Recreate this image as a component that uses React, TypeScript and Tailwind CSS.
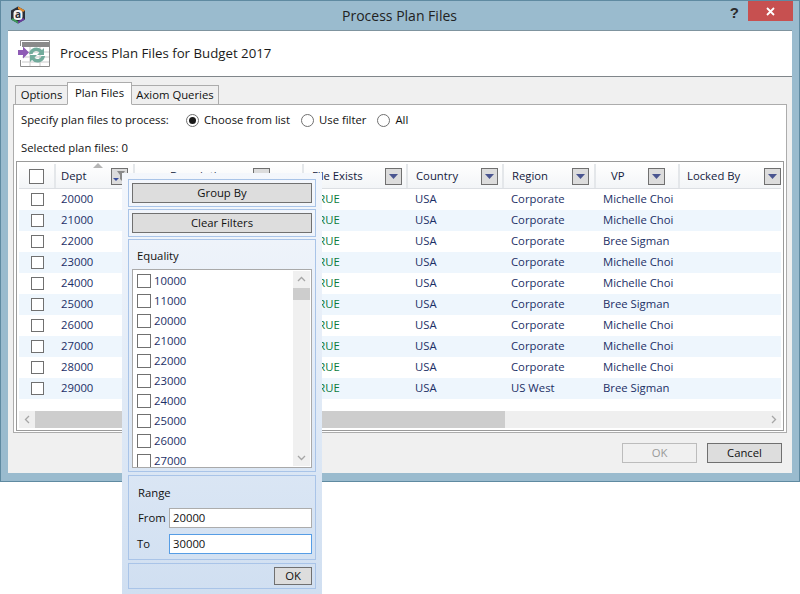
const rows = [
  ["20000", "USA", "Corporate", "Michelle Choi"],
  ["21000", "USA", "Corporate", "Michelle Choi"],
  ["22000", "USA", "Corporate", "Bree Sigman"],
  ["23000", "USA", "Corporate", "Michelle Choi"],
  ["24000", "USA", "Corporate", "Michelle Choi"],
  ["25000", "USA", "Corporate", "Bree Sigman"],
  ["26000", "USA", "Corporate", "Michelle Choi"],
  ["27000", "USA", "Corporate", "Michelle Choi"],
  ["28000", "USA", "Corporate", "Michelle Choi"],
  ["29000", "USA", "US West", "Bree Sigman"],
];

const listValues = ["10000", "11000", "20000", "21000", "22000", "23000", "24000", "25000", "26000", "27000"];

const Check = ({ className = "w-[14px] h-[14px]" }: { className?: string }) => (
  <span className={`block shrink-0 border border-[#707070] bg-white ${className}`} />
);

const Radio = ({ on = false }: { on?: boolean }) => (
  <span className="flex items-center justify-center w-[13px] h-[13px] rounded-full border border-[#707070] bg-white">
    {on && <span className="block w-[7px] h-[7px] rounded-full bg-[#1a1a1a]" />}
  </span>
);

const HeadButton = ({ filter = false }: { filter?: boolean }) => (
  <span className="flex items-center justify-center w-[17px] h-[17px] border border-[#707070] bg-[#dcdcdc]">
    {filter ? (
      <svg width="13" height="13" viewBox="0 0 13 13">
        <path d="M4 1h8L9 5v6L7 9V5z" fill="#8a8a8a" />
        <path d="M0 8h6L3 11z" fill="#3b4f9c" />
      </svg>
    ) : (
      <svg width="9" height="5" viewBox="0 0 9 5">
        <path d="M0 0h9L4.5 5z" fill="#4a5590" />
      </svg>
    )}
  </span>
);

const Head = ({ label, w, filter, pl, pr }: { label: string; w: string; filter?: boolean; pl: string; pr: string }) => (
  <div className={`${w} ${pl} ${pr} h-full shrink-0 flex items-center justify-between border-r-2 border-[#e4e7ea] last:border-r-0`}>
    <span className="text-[#14213d]">{label}</span>
    <HeadButton filter={filter} />
  </div>
);

const Chevron = ({ d }: { d: string }) => (
  <svg width="9" height="9" viewBox="0 0 9 9" fill="none" stroke="#a6a6a6" strokeWidth="1.3">
    <path d={d} />
  </svg>
);

const TitleBar = () => (
  <div className="h-[29px] flex items-center relative">
    <svg className="ml-[8px] -mt-[1px]" width="18" height="18" viewBox="0 0 18 18">
      <path d="M9 0.5l7 4v9l-7 4-7-4v-9z" fill="#2b2f38" />
      <path d="M9 0.5l7 4-2 1.5-5-3z" fill="#e08a2c" />
      <path d="M2 13.5l7 4v-2l-5-3.5z" fill="#3d9a5c" />
      <path d="M16 13.5l-7 4v-2l5-3.5z" fill="#6a3fa0" />
      <rect x="4.5" y="4" width="9" height="10" rx="3.5" fill="#f4f4f4" />
      <text x="9" y="12.2" textAnchor="middle" fontSize="10" fontWeight="700" fill="#2b2f38" fontFamily="'Open Sans', sans-serif">a</text>
    </svg>
    <span className="flex-1 text-center text-[14px] text-[#222] pr-[27px]">Process Plan Files</span>
    <span className="absolute right-[60px] top-[1px] text-[15px] font-bold text-[#2b2b2b] font-['Liberation_Sans',sans-serif]">?</span>
    <span className="absolute right-[6px] top-0 w-[45px] h-[20px] bg-[#c75050] flex items-center justify-center">
      <svg width="9" height="9" viewBox="0 0 9 9" stroke="#fff" strokeWidth="1.8">
        <path d="M1 1l7 7M8 1l-7 7" />
      </svg>
    </span>
  </div>
);

const HeaderIcon = () => (
  <svg width="33" height="28" viewBox="0 0 33 28" className="ml-[10px] shrink-0">
    <path d="M31.5 6V.5h-29V6M2.5 20v6.5h29V6" fill="#fff" stroke="#8c8c8c" />
    <rect x="4" y="2" width="27" height="5" fill="#8a8a8a" />
    <path d="M4 12h27M4 17h27M4 22h27M12 7v19M22 7v19" stroke="#c9c9c9" />
    <path d="M0 10h5V6.5l6 6-6 6V15H0z" fill="#8e5bb5" />
    <path d="M11 14a7.5 7.5 0 0 1 13-4l2-2v7h-7l2.5-2.5a4 4 0 0 0-7 1.5z" fill="#72ab9c" />
    <path d="M27 16a7.5 7.5 0 0 1-13 4l-2 2v-7h7l-2.5 2.5a4 4 0 0 0 7-1.5z" fill="#72ab9c" />
  </svg>
);

const Tabs = () => (
  <div className="flex items-end h-[22px] pl-[2px] relative z-10 -mb-px">
    <div className="w-[52px] h-[20px] border border-[#acacac] border-r-0 bg-[#efefef] flex items-center justify-center">Options</div>
    <div className="w-[65px] h-[23px] border border-[#acacac] border-b-white bg-white flex items-center justify-center">Plan Files</div>
    <div className="w-[87px] h-[20px] border border-[#acacac] border-l-0 bg-[#efefef] flex items-center justify-center">Axiom Queries</div>
  </div>
);

const Grid = () => (
  <div className="mx-[2px] h-[270px] border border-[#9a9a9a] flex flex-col bg-white">
    <div className="mx-[2px] h-[26px] mt-px pt-px flex items-center border-b border-[#dcdfe3] bg-gradient-to-b from-white to-[#f3f5f7] relative">
      <div className="w-[37px] h-full flex items-center justify-center border-r-2 border-[#e4e7ea] shrink-0">
        <Check className="w-[15px] h-[15px]" />
      </div>
      <span className="absolute left-[74px] top-0 w-0 h-0 border-x-[5px] border-x-transparent border-b-[5px] border-b-[#b5b5b5]" />
      <Head label="Dept" w="w-[79px]" pl="pl-[5px]" pr="pr-[5px]" filter />
      <Head label="Description" w="w-[169px]" pl="pl-[35px]" pr="pr-[32px]" />
      <Head label="File Exists" w="w-[104px]" pl="pl-2" pr="pr-[4px]" />
      <Head label="Country" w="w-[96px]" pl="pl-2" pr="pr-[4px]" />
      <Head label="Region" w="w-[92px]" pl="pl-2" pr="pr-[5px]" />
      <Head label="VP" w="w-[84px]" pl="pl-[15px]" pr="pr-[13px]" />
      <Head label="Locked By" w="w-[102px]" pl="pl-[7px]" pr="pr-px" />
    </div>
    <div className="h-[210px]">
      {rows.map((r, i) => (
        <div key={r[0]} className={`mx-[2px] h-[21px] flex items-center text-[#1c2f66] ${i % 2 ? "bg-[#eef6fd]" : "bg-white"}`}>
          <div className="w-[37px] flex justify-center shrink-0">
            <Check className="w-[13px] h-[13px]" />
          </div>
          <span className="w-[79px] pl-[5px] shrink-0">{r[0]}</span>
          <span className="w-[169px] shrink-0" />
          <span className="w-[104px] pl-2 shrink-0 text-[#0b7a3b]">TRUE</span>
          <span className="w-[96px] pl-[7px] shrink-0">{r[1]}</span>
          <span className="w-[92px] pl-[7px] shrink-0">{r[2]}</span>
          <span className="w-[84px] pl-[7px] shrink-0 whitespace-nowrap">{r[3]}</span>
        </div>
      ))}
    </div>
    <div className="mx-[2px] mt-[12px] h-[17px] flex items-center bg-[#efefef]">
      <div className="w-[16px] flex justify-center">
        <Chevron d="M6 1L2.5 4.5 6 8" />
      </div>
      <div className="w-[470px] h-full bg-[#cdcdcd]" />
      <div className="flex-1 flex justify-end pr-[3px]">
        <Chevron d="M3 1l3.5 3.5L3 8" />
      </div>
    </div>
  </div>
);

const FilterBox = ({ className, children }: { className: string; children: React.ReactNode }) => (
  <div className={`border border-[#a9c4e8] px-[3px] ${className}`}>{children}</div>
);

const FilterPopup = () => (
  <div className="absolute left-[122px] top-[173px] w-[200px] h-[421px] px-[6px] pt-[6px] flex flex-col bg-gradient-to-b from-[#f4f7fc] to-[#d0dff1]">
    <FilterBox className="h-[28px] pt-[3px]">
      <div className="h-[20px] border border-[#707070] bg-[#dddddd] flex items-center justify-center">Group By</div>
    </FilterBox>
    <FilterBox className="h-[28px] mt-[2px] pt-[3px]">
      <div className="h-[20px] pt-px border border-[#707070] bg-[#dddddd] flex items-center justify-center">Clear Filters</div>
    </FilterBox>
    <FilterBox className="h-[233px] mt-[2px] pb-[3px] flex flex-col">
      <div className="h-[29px] flex items-center pl-[5px] pt-[4px]">Equality</div>
      <div className="flex-1 border border-[#a9a9a9] bg-white flex overflow-hidden">
        <div className="flex-1 pl-[4px] pt-px">
          {listValues.map(v => (
            <div key={v} className="h-[20px] flex items-center gap-[3px] text-[#1c2f66]">
              <Check />
              {v}
            </div>
          ))}
        </div>
        <div className="w-[17px] mr-px my-px flex flex-col bg-[#f0f0f0]">
          <div className="h-[17px] flex items-center justify-center">
            <Chevron d="M1 6l3.5-3.5L8 6" />
          </div>
          <div className="h-[12px] bg-[#cdcdcd]" />
          <div className="flex-1" />
          <div className="h-[17px] flex items-center justify-center">
            <Chevron d="M1 3l3.5 3.5L8 3" />
          </div>
        </div>
      </div>
    </FilterBox>
    <FilterBox className="h-[85px] mt-[3px] flex flex-col">
      <div className="h-[32px] shrink-0 flex items-center pl-[6px] pt-[2px]">Range</div>
      <div className="h-[20px] flex items-center">
        <span className="w-[37px] pl-[6px] shrink-0">From</span>
        <div className="flex-1 h-full border border-[#acacac] bg-white pl-[3px] flex items-center">20000</div>
      </div>
      <div className="h-[20px] mt-[6px] flex items-center">
        <span className="w-[37px] pl-[5px] shrink-0">To</span>
        <div className="flex-1 h-full border border-[#569de5] bg-white pl-[3px] flex items-center">30000</div>
      </div>
    </FilterBox>
    <FilterBox className="h-[26px] mt-[3px] flex items-center justify-end">
      <div className="w-[38px] h-[18px] border border-[#707070] bg-[#dddddd] flex items-center justify-center">OK</div>
    </FilterBox>
  </div>
);

export default function App() {
  return (
    <div className="relative w-[800px] h-[594px] bg-white overflow-hidden text-[11.3px] text-[#111] font-['Open_Sans',sans-serif]">
      <div className="h-[482px] bg-[#9abbce] border border-[#5f8aa1] flex flex-col">
        <TitleBar />
        <div className="mx-[7px] h-[443px] bg-[#f0f0f0] border-t border-[#7f949f] flex flex-col">
          <div className="h-[46px] bg-white border-b border-[#80868a] flex items-center gap-[9px] shrink-0">
            <HeaderIcon />
            <span className="text-[13.25px] text-[#1a1a1a]">Process Plan Files for Budget 2017</span>
          </div>
          <div className="px-[5px] pt-[6px]">
            <Tabs />
            <div className="h-[329px] border border-[#acacac] bg-white flex flex-col">
              <div className="h-[30px] flex items-center pl-[7px]">
                <span className="w-[165px]">Specify plan files to process:</span>
                <span className="flex items-center gap-[5px]">
                  <Radio on />
                  Choose from list
                </span>
                <span className="flex items-center gap-[5px] ml-[11px]">
                  <Radio />
                  Use filter
                </span>
                <span className="flex items-center gap-[5px] ml-[11px]">
                  <Radio />
                  All
                </span>
              </div>
              <div className="h-[26px] flex items-center pl-[7px]">Selected plan files: 0</div>
              <Grid />
            </div>
          </div>
          <div className="flex justify-end gap-[10px] pr-[10px] pt-[10px]">
            <div className="w-[75px] h-[20px] pt-px border border-[#bcbcbc] bg-[#f0f0f0] text-[#9a9a9a] flex items-center justify-center">OK</div>
            <div className="w-[75px] h-[20px] pt-px border border-[#707070] bg-[#dddddd] flex items-center justify-center">Cancel</div>
          </div>
        </div>
      </div>
      <FilterPopup />
    </div>
  );
}
